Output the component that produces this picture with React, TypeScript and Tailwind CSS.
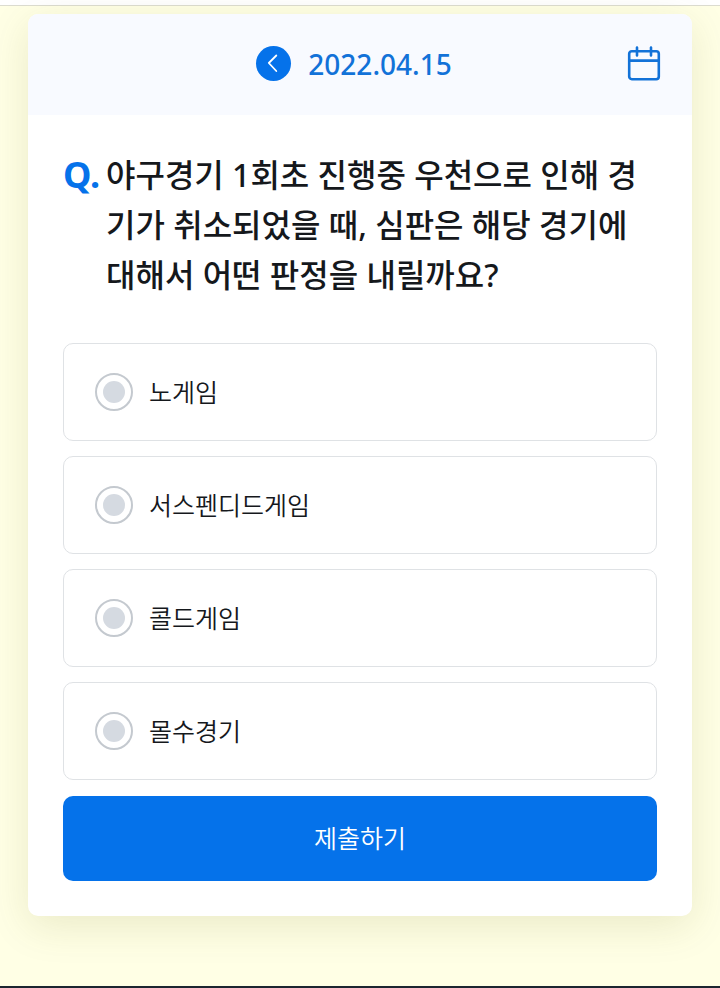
import { useState } from 'react';

const QUIZ = {
  date: '2022.04.15',
  question: '야구경기 1회초 진행중 우천으로 인해 경기가 취소되었을 때, 심판은 해당 경기에 대해서 어떤 판정을 내릴까요?',
  options: ['노게임', '서스펜디드게임', '콜드게임', '몰수경기'],
};

function ChevronIcon() {
  return (
    <svg width="35" height="35" viewBox="0 0 35 35" fill="none" stroke="#fff" strokeWidth="1.8" strokeLinecap="round" strokeLinejoin="round" aria-hidden="true">
      <path d="M20.3 9.5 L12.8 17 L20.3 25" />
    </svg>
  );
}

function CalendarIcon() {
  return (
    <svg width="34" height="36" viewBox="0 0 34 36" fill="none" stroke="#1272d8" strokeWidth="2.6" aria-hidden="true">
      <rect x="2.2" y="5.2" width="29.6" height="28" rx="2.6" />
      <path d="M2.2 14.6 H31.8" />
      <path d="M10 1.6 V9.4 M24 1.6 V9.4" strokeLinecap="round" />
    </svg>
  );
}

function QuizHeader({ date }: { date: string }) {
  return (
    <header className="grid h-[101px] grid-cols-[36px_1fr_36px] items-center bg-[#f8faff] px-[30px] pb-0.5">
      <div className="col-start-2 flex items-center justify-center gap-[17px] pr-3">
        <button type="button" aria-label="이전 날짜" className="rounded-full bg-[#0572ea]">
          <ChevronIcon />
        </button>
        <time className="text-[28px] leading-9 font-medium text-[#1272d8]">{date}</time>
      </div>
      <button type="button" aria-label="달력" className="flex justify-center">
        <CalendarIcon />
      </button>
    </header>
  );
}

interface OptionProps {
  label: string;
  checked: boolean;
  onSelect: () => void;
}

function Option({ label, checked, onSelect }: OptionProps) {
  return (
    <label className="flex h-[98px] cursor-pointer items-center gap-4 rounded-[10px] border border-[#dfe2e5] px-[31px]">
      <input
        type="radio"
        name="answer"
        checked={checked}
        onChange={onSelect}
        className="size-[38px] shrink-0 appearance-none rounded-full border-2 border-[#c4c9cf] bg-[#d5dae1] bg-clip-content p-[6px] checked:border-[#0572ea] checked:bg-[#0572ea]"
      />
      <span className="text-[25px] leading-9 font-[350] text-[#15181c]">{label}</span>
    </label>
  );
}

export default function App() {
  const [answer, setAnswer] = useState<string | null>(null);

  return (
    <div className="flex min-h-screen flex-col border-b-2 border-[#1c2530] bg-[#ffffe5] font-['Noto_Sans','Noto_Sans_CJK_KR',sans-serif]">
      <div className="h-[6px] border-b border-[#dcdcd0] bg-white" />

      <main className="px-7 pt-2 pb-[70px]">
        <div className="overflow-hidden rounded-[10px] bg-white shadow-[0_10px_40px_rgba(90,90,0,0.13)]">
          <QuizHeader date={QUIZ.date} />

          <form className="px-[35px] pt-[35px] pb-[35px]" onSubmit={(e) => e.preventDefault()}>
            <h1 className="flex gap-[7px] text-[32px] leading-[50px] font-medium break-all text-[#15181c]">
              <span className="w-9 shrink-0 text-[36px] font-bold text-[#0572ea]">Q.</span>
              <span>{QUIZ.question}</span>
            </h1>

            <div className="mt-[43px] flex flex-col gap-[15px]">
              {QUIZ.options.map((option) => (
                <Option key={option} label={option} checked={answer === option} onSelect={() => setAnswer(option)} />
              ))}
            </div>

            <button type="submit" className="mt-4 h-[85px] w-full rounded-[10px] bg-[#0572ea] text-[25px] font-[350] text-white">
              제출하기
            </button>
          </form>
        </div>
      </main>
    </div>
  );
}
